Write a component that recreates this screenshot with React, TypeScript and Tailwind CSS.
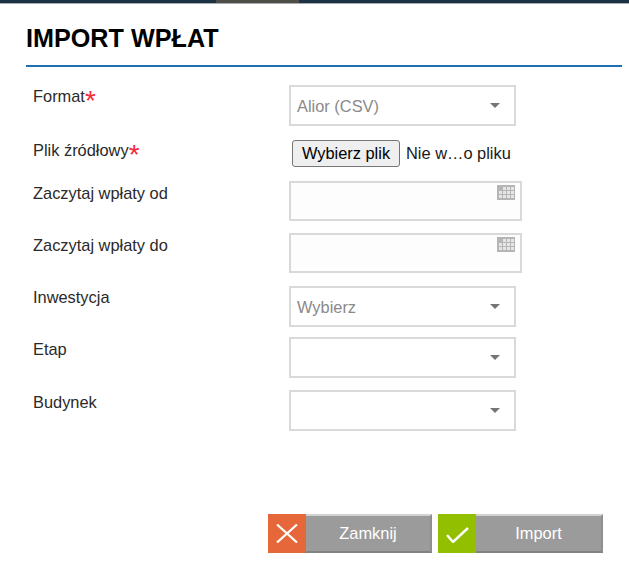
import React from 'react'

function CaretSelect({ value }: { value?: string }) {
  return (
    <div className="w-[227px] h-[41px] border-2 border-[#d9d9d9] bg-white flex items-center justify-between pl-[6px] pr-[14px]">
      <span className="text-[16.4px] text-[#8a8a8a] mt-[1px]">{value}</span>
      <svg width="10" height="5" viewBox="0 0 10 5" className="mt-[-1px]">
        <path d="M0 0h10L5 5z" fill="#757575" />
      </svg>
    </div>
  )
}

function DateInput() {
  return (
    <div className="relative w-[233px] h-[40px] border-2 border-[#d9d9d9] bg-[#fdfdfd]">
      <svg width="18" height="15" viewBox="0 0 18 15" className="absolute top-[2px] right-[5px]">
        <rect width="18" height="15" fill="#b5b5b5" />
        {[1, 5, 9].map(y =>
          [2, 6, 10, 14].map(x =>
            y === 1 && x === 2 ? null : <rect key={`${x}-${y}`} x={x} y={y + 1} width="3" height="3" fill="#e6e6e6" />
          )
        )}
      </svg>
    </div>
  )
}

function Label({ text, required }: { text: string; required?: boolean }) {
  return (
    <div className="w-[256px] pl-[7px] text-[16.4px] leading-[18px] text-[#2a2a2a] shrink-0">
      {text}
      {required && <span className="text-[#f5293a] text-[28px] leading-[18px] align-[-8px]">*</span>}
    </div>
  )
}

export default function App() {
  return (
    <div className="w-[629px] h-[570px] bg-white overflow-hidden font-['Liberation_Sans',Arial,sans-serif]">
      <div className="h-[4px] flex border-b border-[#a9adb0]">
        <div className="w-[216px] bg-[#1b3144]" />
        <div className="w-[83px] bg-[#4f4f4a]" />
        <div className="flex-1 bg-[#1b3144]" />
      </div>
      <div className="ml-[26px] mr-[7px] h-[63px] border-b-2 border-[#1f6fb5] pt-[19px]">
        <h1 className="text-[25.2px] leading-[30px] font-bold text-black">IMPORT WPŁAT</h1>
      </div>

      <div className="ml-[26px] mt-[18px] flex flex-col">
        <div className="flex h-[55px]">
          <div className="pt-[2px]"><Label text="Format" required /></div>
          <div className="ml-[7px]"><CaretSelect value="Alior (CSV)" /></div>
        </div>
        <div className="flex h-[41px]">
          <div className="pt-[1px]"><Label text="Plik źródłowy" required /></div>
          <div className="flex items-start ml-[10px]">
            <button className="w-[108px] h-[27px] rounded-[3px] border border-[#767676] bg-[#efefef] text-[16.4px] text-black whitespace-nowrap">
              Wybierz plik
            </button>
            <span className="ml-[6px] text-[16.4px] leading-[27px] text-[#1a1a1a] whitespace-nowrap">Nie w…o pliku</span>
          </div>
        </div>
        <div className="flex h-[52px]">
          <div className="pt-[3px]"><Label text="Zaczytaj wpłaty od" /></div>
          <div className="ml-[7px]"><DateInput /></div>
        </div>
        <div className="flex h-[53px]">
          <div className="pt-[3px]"><Label text="Zaczytaj wpłaty do" /></div>
          <div className="ml-[7px]"><DateInput /></div>
        </div>
        <div className="flex h-[51px]">
          <div className="pt-[2px]"><Label text="Inwestycja" /></div>
          <div className="ml-[7px]"><CaretSelect value="Wybierz" /></div>
        </div>
        <div className="flex h-[53px]">
          <div className="pt-[3px]"><Label text="Etap" /></div>
          <div className="ml-[7px]"><CaretSelect /></div>
        </div>
        <div className="flex h-[41px]">
          <div className="pt-[3px]"><Label text="Budynek" /></div>
          <div className="ml-[7px]"><CaretSelect /></div>
        </div>
      </div>

      <div className="ml-[268px] mt-[83px] flex gap-[6px]">
        <button className="w-[164px] h-[39px] flex bg-[#9b9b9b] border-t-2 border-r-2 border-b-2 border-t-[#d2d2d2] border-r-[#8f8f8f] border-b-[#828282] text-white text-[16.4px]">
          <span className="w-[38px] h-[39px] -mt-[2px] bg-[#e6673a] flex items-center justify-center shrink-0">
            <svg width="22" height="19" viewBox="0 0 22 19">
              <path d="M1 .5l20 18M21 .5L1 18.5" stroke="#ffffff" strokeWidth="2.2" fill="none" />
            </svg>
          </span>
          <span className="flex-1 h-full flex items-center justify-center">Zamknij</span>
        </button>
        <button className="w-[165px] h-[39px] flex bg-[#9b9b9b] border-t-2 border-r-2 border-b-2 border-t-[#d2d2d2] border-r-[#8f8f8f] border-b-[#828282] text-white text-[16.4px]">
          <span className="w-[38px] h-[39px] -mt-[2px] bg-[#92c000] flex items-center justify-center shrink-0">
            <svg width="24" height="16" viewBox="0 0 24 16" className="mt-[3px]">
              <path d="M2 8l6 7L23 1" stroke="#ffffff" strokeWidth="2.4" fill="none" />
            </svg>
          </span>
          <span className="flex-1 h-full flex items-center justify-center">Import</span>
        </button>
      </div>
    </div>
  )
}
